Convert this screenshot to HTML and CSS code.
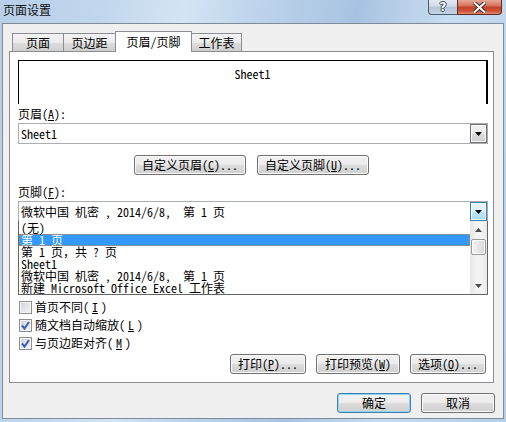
FILE: index.html
```html
<!DOCTYPE html>
<html lang="zh-CN">
<head>
<meta charset="utf-8">
<title>页面设置</title>
<link rel="stylesheet" href="styles.css">
</head>
<body>
<div class="window">
  <div class="titlebar">
    <div class="title">页面设置</div>
    <div class="caption-buttons">
      <div class="cap-btn help">?</div>
      <div class="cap-btn close">
        <svg width="13" height="11" viewBox="0 0 13 11"><path d="M1.5 1 L11.5 10 M11.5 1 L1.5 10" stroke="#3a2a2a" stroke-width="4" stroke-linecap="square"/><path d="M1.5 1 L11.5 10 M11.5 1 L1.5 10" stroke="#fff" stroke-width="2" stroke-linecap="square"/></svg>
      </div>
    </div>
  </div>
  <div class="client">
    <div class="tabs">
      <div class="tab tab-w52">页面</div>
      <div class="tab tab-w53">页边距</div>
      <div class="tab active">页眉/页脚</div>
      <div class="tab tab-w51">工作表</div>
    </div>
    <div class="panel">
      <div class="preview"><span>Sheet1</span></div>
      <div class="label">页眉(<u>A</u>):</div>
      <div class="combo">
        <div class="combo-text">Sheet1</div>
        <div class="combo-btn"><svg width="7" height="4" viewBox="0 0 7 4"><polygon points="0,0 7,0 3.5,4" fill="#000"/></svg></div>
      </div>
      <div class="custom-row">
        <button class="btn btn-custom">自定义页眉(<u>C</u>)...</button>
        <button class="btn btn-custom">自定义页脚(<u>U</u>)...</button>
      </div>
      <div class="label label-footer">页脚(<u>F</u>):</div>
      <div class="combo">
        <div class="combo-text">微软中国 机密 , 2014/6/8,  第 1 页</div>
        <div class="combo-btn hot"><svg width="7" height="4" viewBox="0 0 7 4"><polygon points="0,0 7,0 3.5,4" fill="#000"/></svg></div>
        <div class="dropdown">
          <ul class="items">
            <li>(无)</li>
            <li class="sel">第 1 页</li>
            <li>第 1 页，共 ? 页</li>
            <li>Sheet1</li>
            <li>微软中国 机密 , 2014/6/8,  第 1 页</li>
            <li>新建 Microsoft Office Excel 工作表</li>
          </ul>
          <div class="scrollbar">
            <div class="sb-arrow"><svg width="7" height="4" viewBox="0 0 7 4"><polygon points="0,4 7,4 3.5,0" fill="#4d4d4d"/></svg></div>
            <div class="sb-track"><div class="sb-thumb"></div></div>
            <div class="sb-arrow"><svg width="7" height="4" viewBox="0 0 7 4"><polygon points="0,0 7,0 3.5,4" fill="#4d4d4d"/></svg></div>
          </div>
        </div>
      </div>
      <div class="checks">
        <label class="check"><span class="box"></span>首页不同(<u>I</u>)</label>
        <label class="check"><span class="box checked"><svg width="11" height="11" viewBox="0 0 11 11"><path d="M2 5.5 L4.5 8.5 L9 2" fill="none" stroke="#3a5fb0" stroke-width="2"/></svg></span>随文档自动缩放(<u>L</u>)</label>
        <label class="check"><span class="box checked"><svg width="11" height="11" viewBox="0 0 11 11"><path d="M2 5.5 L4.5 8.5 L9 2" fill="none" stroke="#3a5fb0" stroke-width="2"/></svg></span>与页边距对齐(<u>M</u>)</label>
      </div>
      <div class="panel-buttons">
        <button class="btn btn-76">打印(<u>P</u>)...</button>
        <button class="btn btn-84">打印预览(<u>W</u>)</button>
        <button class="btn btn-76">选项(<u>O</u>)...</button>
      </div>
    </div>
    <div class="dialog-buttons">
      <button class="btn btn-73 default">确定</button>
      <button class="btn btn-73">取消</button>
    </div>
  </div>
</div>
</body>
</html>
```

FILE: styles.css
```css
* { box-sizing: border-box; }
html, body { margin: 0; padding: 0; }
body {
  width: 506px;
  height: 422px;
  overflow: hidden;
  font-family: "Noto Sans Mono CJK SC", "Noto Sans CJK SC", sans-serif;
  font-size: 12px;
  color: #000;
  background: linear-gradient(100deg, #b7cfe8 0%, #c2d7ed 18%, #d4e4f4 32%, #bcd3eb 45%, #a8c3e1 62%, #c9ddf1 78%, #b5cde7 100%);
}
.window {
  display: flex;
  flex-direction: column;
  height: 422px;
}
.titlebar {
  height: 23px;
  display: flex;
  justify-content: space-between;
  align-items: flex-start;
  padding: 0 4px 0 3px;
}
.title {
  font-family: "Noto Sans CJK SC", sans-serif;
  font-size: 12px;
  line-height: 14px;
  margin-top: 3px;
  color: #111;
}
.caption-buttons {
  display: flex;
}
.cap-btn {
  height: 15px;
  display: flex;
  align-items: center;
  justify-content: center;
  border: 1px solid #4d5b6e;
  border-top: none;
}
.help {
  width: 29px;
  border-right: none;
  border-radius: 0 0 0 4px;
  background: linear-gradient(#e4ebf3 0%, #cfdbe7 45%, #b3c5d8 50%, #c3d3e4 100%);
  color: #fff;
  font-family: "DejaVu Sans", sans-serif;
  font-weight: bold;
  font-size: 12px;
  line-height: 12px;
  text-shadow: 1px 0 #3b4656, -1px 0 #3b4656, 0 1px #3b4656, 0 -1px #3b4656;
}
.close {
  width: 45px;
  border-color: #5b2a25;
  border-radius: 0 0 4px 0;
  background: linear-gradient(#e9a898 0%, #d8735d 40%, #c4402a 52%, #cf5438 80%, #e48a70 100%);
}
.client {
  flex: 1;
  margin: 0 2px 3px 2px;
  background: #f0f0f0;
  border: 1px solid #7d8c9d;
  padding: 7px 8px 0 6px;
  display: flex;
  flex-direction: column;
}
.tabs {
  display: flex;
  align-items: flex-end;
  height: 21px;
  margin: 0 0 -1px 3px;
  position: relative;
  z-index: 1;
}
.tab {
  height: 18px;
  margin-bottom: 1px;
  border: 1px solid #898c95;
  border-bottom: none;
  background: linear-gradient(#f3f3f3 0%, #ebebeb 50%, #dddddd 51%, #cfcfcf 100%);
  text-align: center;
  line-height: 17px;
}
.tab + .tab { margin-left: -1px; }
.tab-w52 { width: 52px; }
.tab-w53 { width: 53px; }
.tab-w51 { width: 51px; }
.tab.active {
  width: 77px;
  height: 21px;
  margin-bottom: 0;
  background: #fff;
  line-height: 20px;
  position: relative;
  z-index: 2;
}
.panel {
  height: 332px;
  margin-right: 1px;
  border: 1px solid #898c95;
  background: #fff;
  padding: 8px 5px 8px 8px;
  display: flex;
  flex-direction: column;
}
.preview {
  height: 44px;
  border-top: 1px solid #000;
  border-left: 1px solid #000;
  border-right: 2px solid #000;
  text-align: center;
  padding-top: 7px;
  line-height: 12px;
}
.label {
  margin-top: 3px;
  line-height: 14px;
  height: 14px;
}
.label-footer { margin-top: 10px; }
.combo {
  margin-top: 2px;
  height: 21px;
  border: 1px solid #abadb3;
  background: #fff;
  display: flex;
  align-items: stretch;
  position: relative;
}
.combo-text {
  flex: 1;
  padding-left: 2px;
  line-height: 19px;
  white-space: pre;
}
.combo-btn {
  width: 17px;
  border: 1px solid #707070;
  background: linear-gradient(#f2f2f2 0%, #ebebeb 50%, #dddddd 51%, #cfcfcf 100%);
  box-shadow: inset 0 0 0 1px #fafafa;
  display: flex;
  align-items: center;
  justify-content: center;
}
.combo-btn.hot {
  border-color: #3c7fb1;
  background: linear-gradient(#eaf6fd 0%, #d9f0fc 50%, #bee6fd 51%, #a7d9f5 100%);
  box-shadow: inset 0 0 0 1px #f2fafe;
}
.custom-row {
  margin-top: 11px;
  display: flex;
  justify-content: center;
  gap: 11px;
  padding-right: 3px;
}
.btn {
  height: 20px;
  padding: 0;
  border: 1px solid #707070;
  border-radius: 3px;
  background: linear-gradient(#f2f2f2 0%, #ebebeb 50%, #dddddd 51%, #cfcfcf 100%);
  box-shadow: inset 0 0 0 1px #fbfbfb;
  font: inherit;
  line-height: 18px;
  color: #000;
  white-space: pre;
}
.btn u { text-decoration: underline; }
.btn-custom { width: 112px; }
.btn-76 { width: 76px; }
.btn-84 { width: 84px; }
.btn-73 { width: 74px; }
.btn.default {
  border-color: #3c7fb1;
  box-shadow: inset 0 0 0 1px #8fd6f7;
}
.dropdown {
  position: absolute;
  top: 100%;
  left: -1px;
  right: -1px;
  height: 74px;
  border: 1px solid #646464;
  border-top: none;
  background: #fff;
  display: flex;
  z-index: 5;
}
.items {
  list-style: none;
  margin: 0;
  padding: 1px 0 0 0;
  flex: 1;
  overflow: hidden;
}
.items li {
  height: 12px;
  line-height: 12px;
  padding-left: 2px;
  white-space: pre;
}
.items li.sel {
  background: #3399ff;
  color: #fff;
  outline: 1px dotted #c88a3a;
  outline-offset: -1px;
}
.scrollbar {
  width: 17px;
  display: flex;
  flex-direction: column;
  background: linear-gradient(90deg, #e6e6e6, #f3f3f3 40%, #f3f3f3 70%, #e9e9e9);
}
.sb-arrow {
  height: 17px;
  display: flex;
  align-items: center;
  justify-content: center;
}
.sb-track { flex: 1; padding-top: 1px; }
.sb-thumb {
  height: 16px;
  margin: 0 1px 0 1px;
  border: 1px solid #9a9a9a;
  border-radius: 2px;
  background: linear-gradient(90deg, #f4f4f4, #e6e6e6 50%, #d8d8d8);
  box-shadow: inset 0 0 0 1px #fdfdfd;
}
.checks {
  margin-top: 76px;
  display: flex;
  flex-direction: column;
}
.check {
  height: 18px;
  display: flex;
  align-items: center;
  gap: 3px;
  padding-left: 1px;
  line-height: 14px;
}
.box {
  width: 13px;
  height: 13px;
  border: 1px solid #8e8f8f;
  background: linear-gradient(135deg, #cfd2d6 0%, #e6e8ea 60%, #f2f2f2 100%);
  box-shadow: inset 0 0 0 1px #f6f6f6;
  display: flex;
  align-items: center;
  justify-content: center;
}
.panel-buttons {
  margin-top: auto;
  display: flex;
  justify-content: flex-end;
  gap: 10px;
  padding-right: 2px;
}
.dialog-buttons {
  margin-top: 10px;
  display: flex;
  justify-content: flex-end;
  gap: 10px;
}
u { text-decoration: underline; }
```
